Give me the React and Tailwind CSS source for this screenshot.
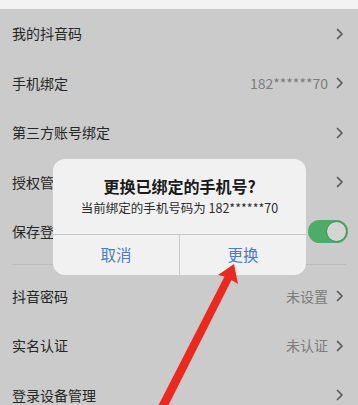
import React from 'react';

const font = { fontFamily: '"Noto Sans CJK SC", "Noto Sans", sans-serif' };

const Chevron = () => (
  <svg width="8" height="12" viewBox="0 0 8 12" className="ml-[8px]">
    <path d="M1.5 1.5 L6 6 L1.5 10.5" fill="none" stroke="#5a5a5a" strokeWidth="1.7" strokeLinecap="round" strokeLinejoin="round" />
  </svg>
);

const Row = ({ label, value, toggle }) => (
  <div className="h-[49.5px] flex items-center justify-between pl-[12px] pr-[14px]">
    <span className="text-[14px] text-[#262626]">{label}</span>
    {toggle ? (
      <div className="w-[40px] h-[23px] rounded-full bg-[#4dad68] relative -mr-[4px]">
        <div className="absolute right-[1px] top-[1px] w-[21px] h-[21px] rounded-full bg-[#d4d4d4] border border-[#3f8a55]" />
      </div>
    ) : (
      <div className="flex items-center">
        {value && <span className="text-[14px] text-[#7c7c7c]">{value}</span>}
        <Chevron />
      </div>
    )}
  </div>
);

export default function App() {
  return (
    <div className="relative w-[358px] h-[405px] overflow-hidden bg-[#cbcbcb]" style={font}>
      <div className="h-[9px] bg-[#f3f3f3]" />
      <Row label="我的抖音码" />
      <Row label="手机绑定" value="182******70" />
      <Row label="第三方账号绑定" />
      <Row label="授权管理" />
      <Row label="保存登录信息" toggle />
      <div className="h-[15px] flex items-center px-[12px]">
        <div className="h-px w-full bg-[#bcbcbc]" />
      </div>
      <Row label="抖音密码" value="未设置" />
      <Row label="实名认证" value="未认证" />
      <Row label="登录设备管理" />

      {/* dialog */}
      <div className="absolute left-[53px] top-[159px] w-[253px] h-[116px] rounded-[12px] bg-[#f1f1f1] flex flex-col overflow-hidden">
        <div className="h-[75px] flex flex-col items-center pt-[15px]">
          <div className="text-[16px] font-bold text-[#1a1a1a] leading-[24px]">更换已绑定的手机号?</div>
          <div className="text-[12.5px] text-[#2c2c2c] leading-[18px] mt-[1px]">当前绑定的手机号码为 182******70</div>
        </div>
        <div className="flex-1 flex border-t border-[#c9c9c9]">
          <div className="flex-1 flex items-center justify-center text-[15.5px] text-[#4a7cc2] border-r border-[#c9c9c9]">取消</div>
          <div className="flex-1 flex items-center justify-center text-[15.5px] text-[#4a7cc2]">更换</div>
        </div>
      </div>

      {/* red arrow */}
      <svg className="absolute left-0 top-0 pointer-events-none" width="358" height="405" viewBox="0 0 358 405">
        <polygon
          points="234,264 238,284 231.5,280 166,410 156,410 224.5,276.5 218,275"
          fill="#ea2a1f"
        />
      </svg>
    </div>
  );
}
